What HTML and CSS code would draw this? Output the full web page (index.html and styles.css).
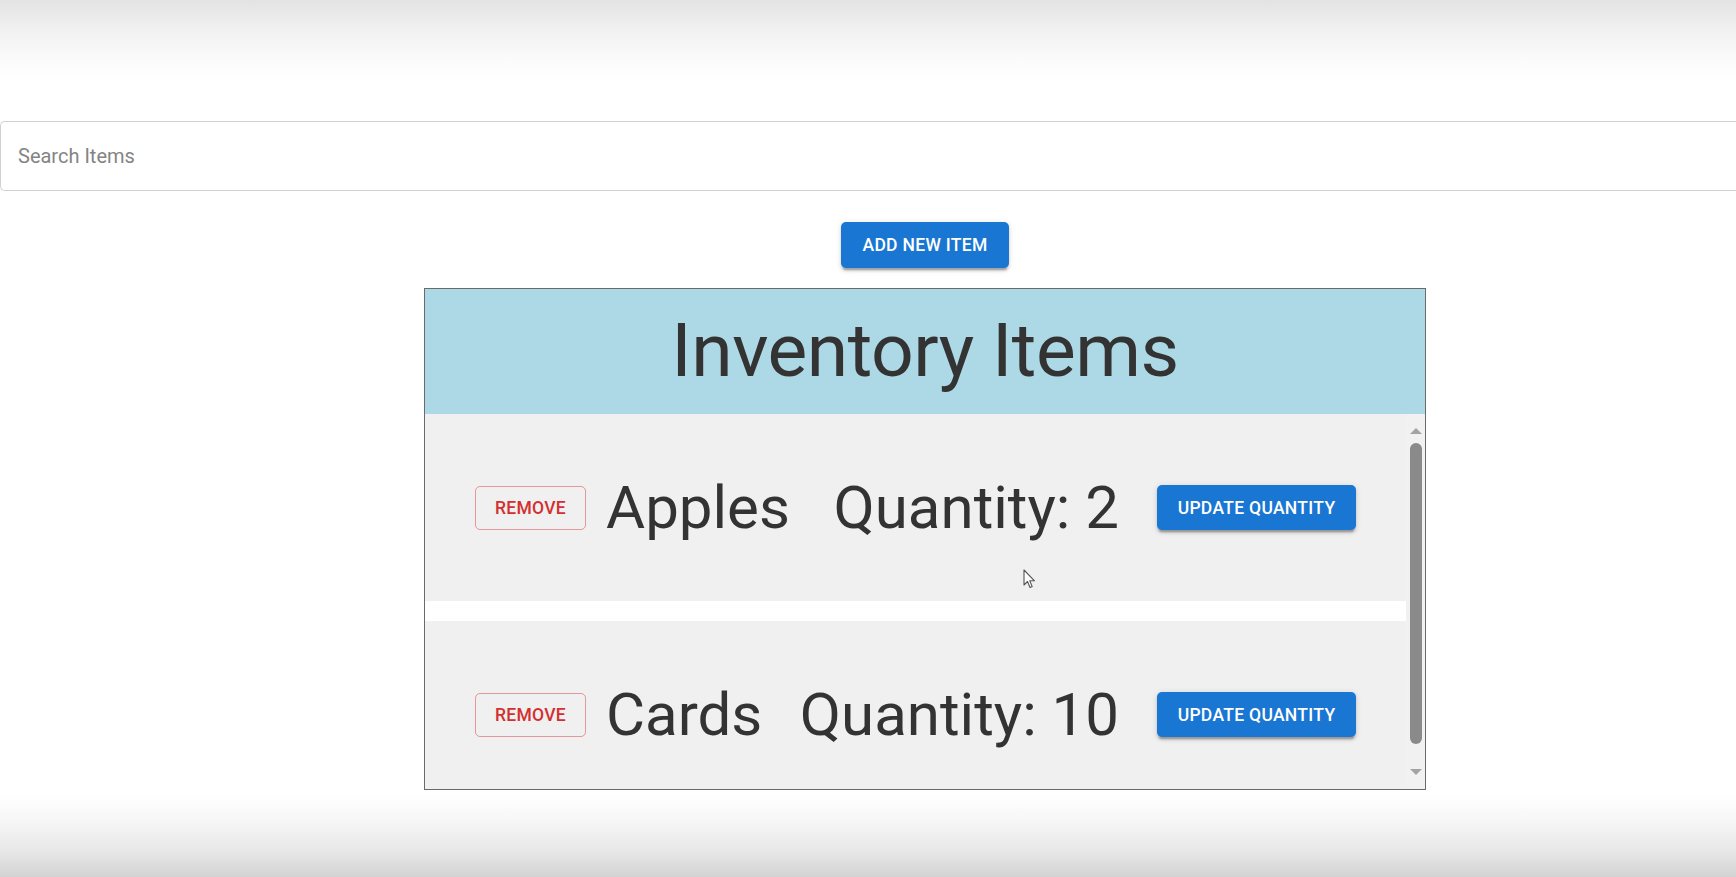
FILE: index.html
```html
<!DOCTYPE html>
<html lang="en">
<head>
<meta charset="utf-8">
<title>Inventory</title>
<link rel="stylesheet" href="styles.css">
</head>
<body>
<div class="page">
  <div class="search">
    <input class="search-input" type="text" placeholder="Search Items">
  </div>
  <button class="btn btn-contained add-btn">Add New Item</button>
  <div class="inventory">
    <div class="header">
      <h2 class="title">Inventory Items</h2>
    </div>
    <div class="list">
      <div class="rows">
        <div class="row">
          <button class="btn btn-outlined">Remove</button>
          <span class="name">Apples</span>
          <span class="qty">Quantity: 2</span>
          <button class="btn btn-contained update">Update Quantity</button>
          <svg class="cursor" width="13" height="20" viewBox="0 0 13 20">
            <path d="M1 1 L1 16 L4.5 12.5 L7 18.5 L9.2 17.6 L6.8 11.8 L11.5 11.8 Z" fill="#fff" stroke="#555" stroke-width="1.1" stroke-linejoin="round"/>
          </svg>
        </div>
        <div class="row">
          <button class="btn btn-outlined">Remove</button>
          <span class="name">Cards</span>
          <span class="qty">Quantity: 10</span>
          <button class="btn btn-contained update">Update Quantity</button>
        </div>
      </div>
      <div class="scrollbar">
        <span class="arrow arrow-up"></span>
        <span class="thumb"></span>
        <span class="arrow arrow-down"></span>
      </div>
    </div>
  </div>
</div>
</body>
</html>
```
FILE: styles.css
```css
html, body {
  margin: 0;
  padding: 0;
}
body {
  width: 1736px;
  height: 877px;
  overflow: hidden;
  font-family: Roboto, "Liberation Sans", sans-serif;
  background: linear-gradient(to bottom,
    #e3e3e3 0px, #f1f1f1 30px, #fbfbfb 60px, #ffffff 85px,
    #ffffff 795px, #f7f7f7 820px, #e8e8e8 850px, #d3d3d3 877px);
}
.page {
  width: 1736px;
  box-sizing: border-box;
  padding-left: 114px;
  display: flex;
  flex-direction: column;
  align-items: center;
  padding-top: 121px;
}
.search {
  align-self: stretch;
  margin-left: -114px;
  height: 70px;
  box-sizing: border-box;
  border: 1px solid #d2d2d2;
  border-right: none;
  border-radius: 5px 0 0 5px;
  background: #fff;
  display: flex;
  align-items: center;
  padding: 0 17px;
}
.search-input {
  border: none;
  outline: none;
  background: transparent;
  width: 100%;
  font-family: Roboto, "Liberation Sans", sans-serif;
  font-size: 20px;
  color: #333;
  padding: 0;
}
.search-input::placeholder {
  color: #848484;
  opacity: 1;
}
.btn {
  font-family: Roboto, "Liberation Sans", sans-serif;
  font-weight: 500;
  font-size: 17.5px;
  letter-spacing: 0.3px;
  text-transform: uppercase;
  white-space: nowrap;
  border-radius: 5px;
  box-sizing: border-box;
  cursor: pointer;
  display: inline-flex;
  align-items: center;
  justify-content: center;
  flex-shrink: 0;
}
.btn-contained {
  background: #1976d2;
  color: #fff;
  border: none;
  padding: 0 10px;
  box-shadow: 0 4px 1.5px -2.5px rgba(0,0,0,0.2), 0 2.5px 2.5px 0 rgba(0,0,0,0.14), 0 1.25px 6px 0 rgba(0,0,0,0.12);
}
.add-btn {
  margin-top: 31px;
  height: 46px;
  width: 168px;
}
.inventory {
  margin-top: 20px;
  width: 1000px;
  border: 1px solid #6a6a6a;
  background: #fff;
}
.header {
  height: 125px;
  background: #add8e6;
  display: flex;
  align-items: center;
  justify-content: center;
}
.title {
  margin: 0 0 4px;
  font-size: 75px;
  font-weight: 400;
  line-height: 1.2;
  color: #333;
  letter-spacing: -0.5px;
}
.list {
  height: 375px;
  display: flex;
}
.rows {
  flex: 1;
  display: flex;
  flex-direction: column;
  gap: 20px;
  overflow: hidden;
}
.row {
  position: relative;
  flex-shrink: 0;
  height: 187px;
  background: #f0f0f0;
  display: flex;
  align-items: center;
  padding: 0 50px;
}
.btn-outlined {
  background: transparent;
  color: #d32f2f;
  border: 1px solid rgba(211, 47, 47, 0.45);
  height: 44px;
  width: 111px;
  padding: 0;
}
.name, .qty {
  font-size: 60px;
  font-weight: 400;
  line-height: 1.2;
  color: #333;
  white-space: nowrap;
}
.name {
  margin-left: 20px;
}
.qty {
  margin-left: auto;
}
.update {
  margin-left: 38px;
  height: 45px;
  width: 199px;
}
.cursor {
  position: absolute;
  left: 598px;
  top: 155px;
}
.scrollbar {
  width: 19px;
  flex-shrink: 0;
  background: #f1f1f1;
  display: flex;
  flex-direction: column;
  align-items: center;
  padding-top: 14px;
  box-sizing: border-box;
}
.arrow {
  width: 0;
  height: 0;
  border-left: 6px solid transparent;
  border-right: 6px solid transparent;
}
.arrow-up {
  border-bottom: 6px solid #a3a3a3;
}
.arrow-down {
  border-top: 6px solid #a3a3a3;
  margin-top: 25px;
}
.thumb {
  margin-top: 9px;
  width: 12px;
  height: 301px;
  border-radius: 6px;
  background: #8a8a8a;
}
```
